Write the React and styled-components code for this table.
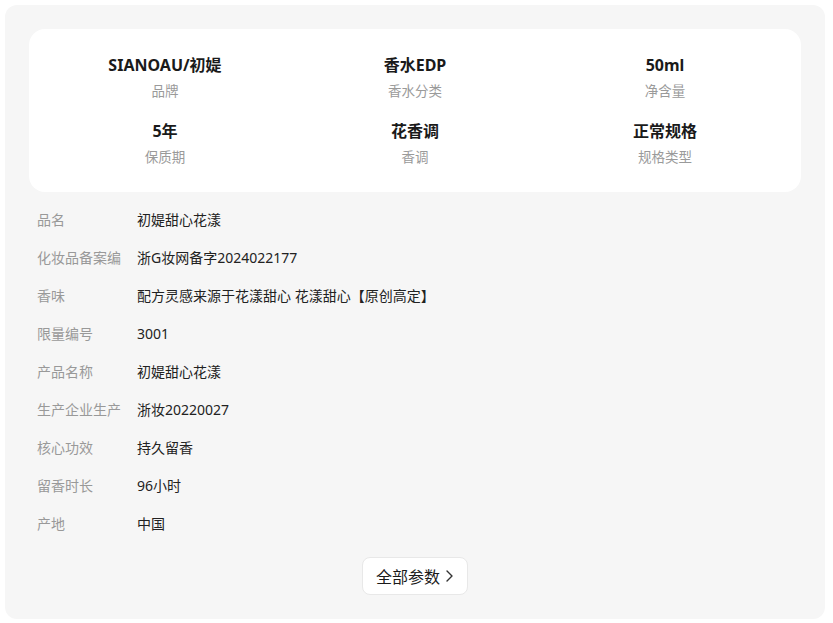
import React from 'react';
import styled, { createGlobalStyle } from 'styled-components';

const GlobalStyle = createGlobalStyle`
  body {
    margin: 0;
    padding: 5px 8px 4px 5px;
    background: #ffffff;
    font-family: 'Noto Sans', 'Noto Sans CJK SC', sans-serif;
  }
`;

const StyledPanel = styled.div`
  background: #f6f6f6;
  border-radius: 12px;
  padding: 24px 24px 24px 24px;
`;

const StyledSummary = styled.div`
  background: #ffffff;
  border-radius: 16px;
  padding: 25px 11px 26px;
  display: grid;
  grid-template-columns: repeat(3, 1fr);
  row-gap: 20px;
`;

const StyledSummaryItem = styled.div`
  display: flex;
  flex-direction: column;
  align-items: center;
  gap: 6px;
`;

const StyledSummaryValue = styled.div`
  font-size: 16px;
  line-height: 22px;
  font-weight: 700;
  color: #1a1a1a;
`;

const StyledSummaryLabel = styled.div`
  font-size: 13.5px;
  line-height: 18px;
  color: #9a9a9a;
`;

const StyledList = styled.div`
  margin-top: 8px;
  padding-left: 8px;
  display: flex;
  flex-direction: column;
`;

const StyledRow = styled.div`
  display: flex;
  align-items: center;
  height: 38px;
  font-size: 14px;
`;

const StyledRowLabel = styled.div`
  width: 100px;
  flex-shrink: 0;
  color: #999999;
  white-space: nowrap;
  overflow: hidden;
`;

const StyledRowValue = styled.div`
  color: #222222;
`;

const StyledFooter = styled.div`
  display: flex;
  justify-content: center;
  margin-top: 15px;
`;

const StyledButton = styled.button`
  display: flex;
  align-items: center;
  gap: 4px;
  height: 38px;
  padding: 0 13px 0 13px;
  background: #ffffff;
  border: 1px solid #e8e8e8;
  border-radius: 8px;
  font-family: inherit;
  font-size: 16px;
  color: #1a1a1a;
  cursor: pointer;
`;

const summary = [
  { value: 'SIANOAU/初媞', label: '品牌' },
  { value: '香水EDP', label: '香水分类' },
  { value: '50ml', label: '净含量' },
  { value: '5年', label: '保质期' },
  { value: '花香调', label: '香调' },
  { value: '正常规格', label: '规格类型' },
];

const params = [
  ['品名', '初媞甜心花漾'],
  ['化妆品备案编', '浙G妆网备字2024022177'],
  ['香味', '配方灵感来源于花漾甜心 花漾甜心【原创高定】'],
  ['限量编号', '3001'],
  ['产品名称', '初媞甜心花漾'],
  ['生产企业生产', '浙妆20220027'],
  ['核心功效', '持久留香'],
  ['留香时长', '96小时'],
  ['产地', '中国'],
];

function Chevron() {
  return (
    <svg width="10" height="14" viewBox="0 0 10 14" fill="none">
      <path d="M3 2l5 5-5 5" stroke="#333" strokeWidth="1.4" strokeLinecap="round" strokeLinejoin="round" />
    </svg>
  );
}

export default function App() {
  return (
    <>
      <GlobalStyle />
      <StyledPanel>
        <StyledSummary>
          {summary.map(item => (
            <StyledSummaryItem key={item.label}>
              <StyledSummaryValue>{item.value}</StyledSummaryValue>
              <StyledSummaryLabel>{item.label}</StyledSummaryLabel>
            </StyledSummaryItem>
          ))}
        </StyledSummary>
        <StyledList>
          {params.map(([label, value]) => (
            <StyledRow key={label}>
              <StyledRowLabel>{label}</StyledRowLabel>
              <StyledRowValue>{value}</StyledRowValue>
            </StyledRow>
          ))}
        </StyledList>
        <StyledFooter>
          <StyledButton>
            全部参数
            <Chevron />
          </StyledButton>
        </StyledFooter>
      </StyledPanel>
    </>
  );
}
